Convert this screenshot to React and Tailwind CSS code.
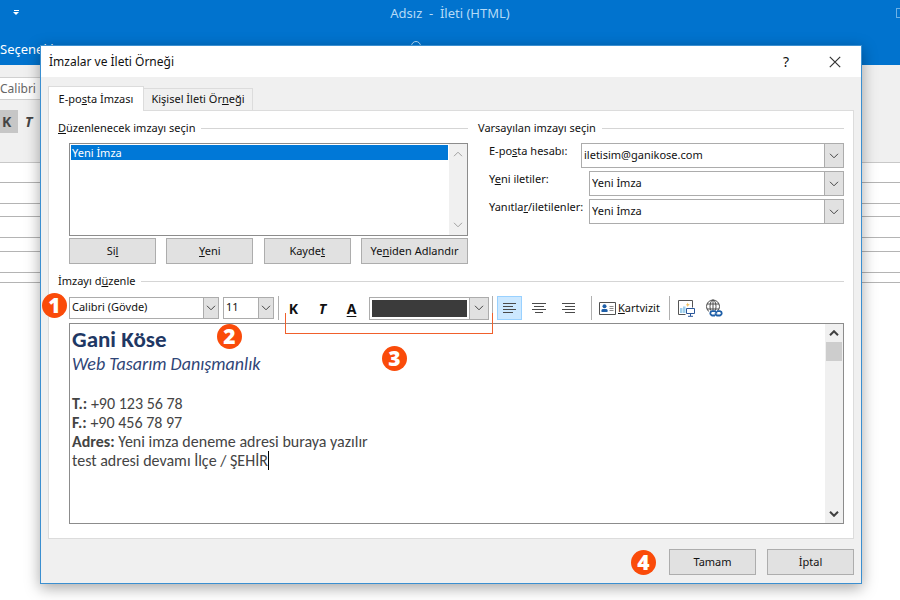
import React, { useState } from "react";

const headerLines = [
  "h-[20px]",
  "h-[21px]",
  "h-[13px]",
  "h-[21px]",
  "h-[14px]",
  "h-[21px]",
  "h-[10px]",
];

const Chevron = ({ up, className = "" }) => (
  <svg
    viewBox="0 0 10 6"
    className={`h-[6px] w-[10px] ${className}`}
    fill="none"
    stroke="currentColor"
  >
    <path d={up ? "M1 5.2 5 1.2 9 5.2" : "M1 0.8 5 4.8 9 0.8"} />
  </svg>
);

const Select = ({ id, label, options, small, className = "" }) => (
  <div className={`relative ${className}`}>
    <select
      id={id}
      aria-label={label}
      defaultValue={options[0]}
      className="h-full w-full appearance-none border border-[#acacac] bg-white pr-5 pb-px pl-[2px] outline-none"
    >
      {options.map((o) => (
        <option key={o}>{o}</option>
      ))}
    </select>
    <span
      className={`pointer-events-none absolute inset-y-0 right-0 flex items-center justify-center border border-[#acacac] bg-[#e1e1e1] text-[#444] ${
        small ? "w-4" : "w-5"
      }`}
    >
      <Chevron />
    </span>
  </div>
);

const Button = ({ children, className = "w-[87px]" }) => (
  <button
    type="button"
    className={`h-[26px] border border-[#adadad] bg-[#e1e1e1] hover:border-[#0078d7] hover:bg-[#e5f1fb] ${className}`}
  >
    {children}
  </button>
);

const Badge = ({ children, className = "" }) => (
  <span
    className={`flex size-[25px] items-center justify-center rounded-full bg-[#fa4b0a] font-['Open_Sans',sans-serif] text-[21px] leading-none font-extrabold text-white ${className}`}
  >
    {children}
  </span>
);

const GroupTitle = ({ children }) => (
  <div className="flex items-center gap-[6px]">
    <h2 className="leading-4">{children}</h2>
    <span className="h-px flex-1 bg-[#d5d5d5]" />
  </div>
);

const Divider = () => <span className="h-6 w-px bg-[#b0b0b0]" />;

const alignLines = {
  left: [[1, 14], [1, 11], [1, 14], [1, 11]],
  center: [[1, 15], [3, 13], [1, 15], [4, 12]],
  right: [[2, 15], [5, 15], [2, 15], [5, 15]],
};

const AlignIcon = ({ type }) => (
  <svg viewBox="0 0 16 12" className="h-3 w-4" stroke="#4a4a4a">
    {alignLines[type].map(([a, b], i) => (
      <path key={i} d={`M${a} ${i * 3 + 1.5}H${b}`} />
    ))}
  </svg>
);

const CardIcon = () => (
  <svg viewBox="0 0 17 13" className="h-[13px] w-[17px]" fill="none">
    <path d="M.5.5h16v12H.5z" stroke="#505050" fill="#fff" />
    <circle cx="5.5" cy="4.2" r="2" fill="#1e5fa8" />
    <path d="M2.5 10V8.2Q2.5 7 4 7H7Q8.5 7 8.5 8.2V10Z" fill="#1e5fa8" />
    <path d="M10.5 4.5h4M10.5 6.5h4M10.5 8.5h4" stroke="#8a8a8a" />
  </svg>
);

const PictureIcon = () => (
  <svg viewBox="0 0 18 17" className="h-[17px] w-[18px]" fill="none">
    <path d="M8.5 14.5H1.5V.5h14v7" stroke="#555" />
    <path d="M3 13V8h2.500v5zM6 13V6.500h2.500V13z" fill="#9fd0ec" />
    <path d="M10.5 2.500l.7 1.600 1.600.4-1.400 1-.6 1.500-.7-1.600-1.300-.5 1.300-.9z" fill="#f0c060" />
    <path d="M9.5 8.5h8v5h-8z" stroke="#2b579a" fill="#fff" />
    <path d="M13.5 14v2M11 16.300h5" stroke="#2b579a" />
  </svg>
);

const LinkIcon = () => (
  <svg viewBox="0 0 18 18" className="size-[18px]" fill="none">
    <g stroke="#505050">
      <circle cx="8" cy="7.5" r="6.5" />
      <ellipse cx="8" cy="7.5" rx="3" ry="6.5" />
      <path d="M8 1v13M2 5h12M2 10h12" />
    </g>
    <path d="M4 11.5h14V18H4z" fill="#fff" />
    <g stroke="#1e5fa8" strokeWidth="1.8">
      <path d="M10 16.5H7a2.200 2.200 0 0 1 0-4.300h2.500a2.200 2.200 0 0 1 2 2.300" />
      <path d="M12 12.200h3a2.200 2.200 0 0 1 0 4.300h-2.500a2.200 2.200 0 0 1-2-2.300" />
    </g>
  </svg>
);

const MessageWindow = () => (
  <div>
    <header className="relative h-[65px] bg-[#0173ce] text-[13px] text-white">
      <div className="absolute top-[10px] left-[13px] flex flex-col items-center gap-px">
        <span className="h-px w-[5px] bg-white" />
        <span className="border-x-[3px] border-t-[3px] border-x-transparent border-t-white" />
      </div>
      <p className="pt-1 text-center leading-[18px] whitespace-pre text-[#b5daf6]">
        Adsız  -  İleti (HTML)
      </p>
      <span className="absolute top-[41px] left-[411px] size-[10px] rounded-full border border-[#b5daf6]" />
      <span className="absolute top-2 right-[-7px] h-[10px] w-[11px] border border-[#6db1e6]" />
      <p className="absolute top-[39px] left-0 leading-5">Seçenekler</p>
    </header>
    <div className="h-[98px] border-b border-[#c8c8c8] bg-[#f0f0f0] pt-3">
      <div className="h-[23px] w-20 border-y border-[#d0d0d0] bg-white text-[12px] leading-[21px] text-[#666]">
        Calibri
      </div>
      <div className="mt-[10px] flex h-[23px] items-center text-[14px] font-bold text-[#444]">
        <span className="flex h-full w-[18px] items-center bg-[#c6c6c6] pl-[2px]">K</span>
        <span className="pl-[7px] italic">T</span>
      </div>
    </div>
    {headerLines.map((h, i) => (
      <div key={i} className={`border-b border-[#b4b4b4] ${h}`} />
    ))}
  </div>
);

const accounts = [
  {
    id: "account",
    label: <>E-po<u>s</u>ta hesabı:</>,
    options: ["iletisim@ganikose.com"],
    wide: true,
  },
  { id: "new", label: <>Y<u>e</u>ni iletiler:</>, options: ["Yeni İmza", "(yok)"] },
  {
    id: "reply",
    label: <>Yanıtla<u>r</u>/iletilenler:</>,
    options: ["Yeni İmza", "(yok)"],
  },
];

const Toolbar = ({ align, setAlign }) => (
  <div className="relative flex h-6 items-center">
    <Badge className="absolute top-[-3px] left-[-27px]">1</Badge>
    <Select
      small
      label="Yazı tipi"
      options={["Calibri (Gövde)", "Arial"]}
      className="h-[22px] w-[150px]"
    />
    <Select
      small
      label="Boyut"
      options={["11", "12", "14"]}
      className="mx-1 h-[22px] w-[51px]"
    />
    <Divider />
    <button type="button" className="w-[29px] text-[14px] font-bold">K</button>
    <button type="button" className="w-[29px] text-[14px] font-bold italic">T</button>
    <button type="button" className="w-[29px] text-[14px] font-bold underline underline-offset-2">
      A
    </button>
    <button
      type="button"
      aria-label="Yazı tipi rengi"
      className="mx-[3px] flex h-[23px] w-[120px] border border-[#acacac] bg-white"
    >
      <span className="m-[2px] flex-1 self-stretch bg-[#3b3b3b]" />
      <span className="flex h-full items-center border-l border-[#acacac] bg-[#e1e1e1] px-1 text-[#444]">
        <Chevron />
      </span>
    </button>
    <Divider />
    <div className="mr-[11px] ml-1 flex gap-1">
      {["left", "center", "right"].map((type) => (
        <button
          key={type}
          type="button"
          aria-label={type}
          onClick={() => setAlign(type)}
          className={`flex h-6 w-[25px] items-center justify-center border ${
            align === type ? "border-[#99d1ff] bg-[#cce8ff]" : "border-transparent"
          }`}
        >
          <AlignIcon type={type} />
        </button>
      ))}
    </div>
    <Divider />
    <button type="button" className="mr-[9px] ml-[7px] flex items-center gap-[2px]">
      <CardIcon />
      <span><u>K</u>artvizit</span>
    </button>
    <Divider />
    <button type="button" aria-label="Resim" className="ml-[7px]">
      <PictureIcon />
    </button>
    <button type="button" aria-label="Köprü" className="ml-[10px]">
      <LinkIcon />
    </button>

    {/* numbered callouts */}
    <span className="pointer-events-none absolute top-[17px] left-[216px] h-[21px] w-[208px] border border-t-0 border-[#f0602c]" />
    <Badge className="absolute top-7 left-[148px]">2</Badge>
    <Badge className="absolute top-[50px] left-[313px]">3</Badge>
  </div>
);

const textAlign = { left: "text-left", center: "text-center", right: "text-right" };

const Editor = ({ align }) => (
  <div className="mt-[3px] flex h-[201px] border border-[#8c8c8c]">
    <div
      contentEditable
      suppressContentEditableWarning
      role="textbox"
      aria-label="İmza"
      className={`flex-1 pt-px pl-[2px] font-[Carlito,Lato,sans-serif] text-[16px] leading-[19px] text-[#444] outline-none ${textAlign[align]}`}
    >
      <p className="text-[23px] leading-7 font-bold text-[#1f3864]">Gani Köse</p>
      <p className="text-[18px] leading-[22px] text-[#2f4577] italic">Web Tasarım Danışmanlık</p>
      <p><br /></p>
      <p><b>T.:</b> +90 123 56 78</p>
      <p><b>F.:</b> +90 456 78 97</p>
      <p><b>Adres:</b> Yeni imza deneme adresi buraya yazılır</p>
      <p>
        test adresi devamı İlçe / <span className="border-r border-black">ŞEHİR</span>
      </p>
    </div>
    <div className="flex w-[18px] flex-col items-center bg-[#f0f0f0] text-[#404040]">
      <Chevron up className="my-[6px] stroke-2" />
      <span className="h-[19px] w-4 bg-[#cdcdcd]" />
      <Chevron className="mt-auto mb-[6px] stroke-2" />
    </div>
  </div>
);

const SignatureDialog = () => {
  const [align, setAlign] = useState("left");

  return (
    <div
      role="dialog"
      aria-labelledby="dialog-title"
      className="absolute top-[45px] right-[38px] left-10 border border-[#3b8fd0] bg-[#f0f0f0] text-[11px] text-[#111] shadow-[0_4px_14px_rgba(0,0,0,0.35)]"
    >
      <div className="flex h-[31px] items-center bg-white pr-5 pl-2">
        <h1 id="dialog-title" className="flex-1 text-[12px]">İmzalar ve İleti Örneği</h1>
        <button type="button" aria-label="Yardım" className="mr-10 text-[14px]">?</button>
        <button type="button" aria-label="Kapat">
          <svg viewBox="0 0 12 12" className="size-3" stroke="#333" strokeWidth="1.2">
            <path d="M.8.8 11.2 11.2M11.2.8.8 11.2" />
          </svg>
        </button>
      </div>

      <div className="px-[7px] pt-[9px]">
        <div role="tablist" className="flex items-end">
          <button
            type="button"
            role="tab"
            aria-selected="true"
            className="relative -mb-px h-[25px] w-24 border border-b-0 border-[#dcdcdc] bg-white"
          >
            E-po<u>s</u>ta İmzası
          </button>
          <button
            type="button"
            role="tab"
            aria-selected="false"
            className="h-[22px] w-[109px] border border-b-0 border-l-0 border-[#dcdcdc]"
          >
            Kişisel İleti Ör<u>n</u>eği
          </button>
        </div>

        <div className="border border-[#dcdcdc] bg-white px-[9px] pt-[9px] pb-[14px]">
          <div className="flex gap-[10px]">
            <section className="w-[410px]">
              <GroupTitle><u>D</u>üzenlenecek imzayı seçin</GroupTitle>
              <div className="mt-[7px] ml-[11px] flex h-[93px] border border-[#8c8c8c]">
                <ul role="listbox" className="flex-1 p-px">
                  <li
                    role="option"
                    aria-selected="true"
                    className="bg-[#0078d7] pl-px leading-[15px] text-white"
                  >
                    Yeni İmza
                  </li>
                </ul>
                <div className="flex w-[18px] flex-col items-center justify-between bg-[#f0f0f0] py-[7px] text-[#a0a0a0]">
                  <Chevron up />
                  <Chevron />
                </div>
              </div>
              <div className="mt-[2px] ml-[11px] flex justify-between">
                <Button>Si<u>l</u></Button>
                <Button><u>Y</u>eni</Button>
                <Button>Kayde<u>t</u></Button>
                <Button className="w-[107px]">Ye<u>n</u>iden Adlandır</Button>
              </div>
            </section>

            <section className="flex-1">
              <GroupTitle>Varsayılan imzayı seçin</GroupTitle>
              <div className="mt-[7px] ml-[11px] flex flex-col gap-[3px]">
                {accounts.map((a) => (
                  <div key={a.id} className="flex">
                    <label htmlFor={a.id} className={a.wide ? "w-[92px]" : "w-[100px]"}>
                      {a.label}
                    </label>
                    <Select id={a.id} options={a.options} className="h-[25px] flex-1" />
                  </div>
                ))}
              </div>
            </section>
          </div>

          <section className="mt-[9px]">
            <GroupTitle>İmzayı d<u>ü</u>zenle</GroupTitle>
            <div className="mt-[7px] ml-[11px]">
              <Toolbar align={align} setAlign={setAlign} />
              <Editor align={align} />
            </div>
          </section>
        </div>
      </div>

      <div className="flex items-center justify-end gap-[11px] px-[7px] pt-[10px] pb-2">
        <Badge className="mr-[2px]">4</Badge>
        <Button>Tamam</Button>
        <Button>İptal</Button>
      </div>
    </div>
  );
};

const App = () => (
  <div className="relative min-h-screen overflow-hidden bg-white font-['Noto_Sans',sans-serif]">
    <MessageWindow />
    <SignatureDialog />
  </div>
);

export default App;
